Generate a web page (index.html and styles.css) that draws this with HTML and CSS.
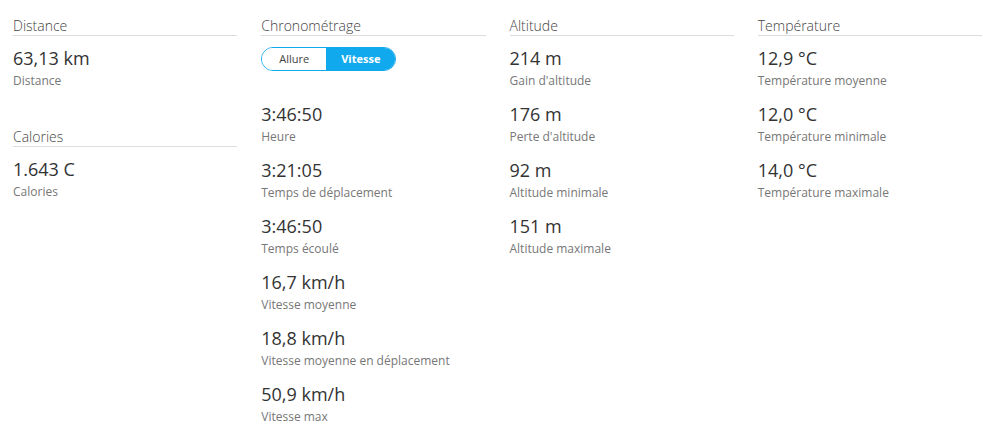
FILE: index.html
```html
<!DOCTYPE html>
<html lang="fr">
<head>
    <meta charset="UTF-8">
    <meta name="viewport" content="width=device-width, initial-scale=1.0">
    <title>Statistiques</title>
    <link rel="stylesheet" href="styles.css">
</head>
<body>

    <div class="stats-grid">

        <!-- Distance + Calories -->
        <div class="stats-column">
            <div class="stats-section">
                <h3 class="section-title">Distance</h3>
                <div class="stat">
                    <div class="stat-value">63,13 km</div>
                    <div class="stat-label">Distance</div>
                </div>
            </div>
            <div class="stats-section">
                <h3 class="section-title">Calories</h3>
                <div class="stat">
                    <div class="stat-value">1.643 C</div>
                    <div class="stat-label">Calories</div>
                </div>
            </div>
        </div>

        <!-- Chronométrage -->
        <div class="stats-column">
            <div class="stats-section">
                <h3 class="section-title">Chronométrage</h3>
                <div class="toggle">
                    <button type="button" class="toggle-btn">Allure</button>
                    <button type="button" class="toggle-btn active">Vitesse</button>
                </div>
                <div class="stat-list">
                    <div class="stat">
                        <div class="stat-value">3:46:50</div>
                        <div class="stat-label">Heure</div>
                    </div>
                    <div class="stat">
                        <div class="stat-value">3:21:05</div>
                        <div class="stat-label">Temps de déplacement</div>
                    </div>
                    <div class="stat">
                        <div class="stat-value">3:46:50</div>
                        <div class="stat-label">Temps écoulé</div>
                    </div>
                    <div class="stat">
                        <div class="stat-value">16,7 km/h</div>
                        <div class="stat-label">Vitesse moyenne</div>
                    </div>
                    <div class="stat">
                        <div class="stat-value">18,8 km/h</div>
                        <div class="stat-label">Vitesse moyenne en déplacement</div>
                    </div>
                    <div class="stat">
                        <div class="stat-value">50,9 km/h</div>
                        <div class="stat-label">Vitesse max</div>
                    </div>
                </div>
            </div>
        </div>

        <!-- Altitude -->
        <div class="stats-column">
            <div class="stats-section">
                <h3 class="section-title">Altitude</h3>
                <div class="stat">
                    <div class="stat-value">214 m</div>
                    <div class="stat-label">Gain d'altitude</div>
                </div>
                <div class="stat">
                    <div class="stat-value">176 m</div>
                    <div class="stat-label">Perte d'altitude</div>
                </div>
                <div class="stat">
                    <div class="stat-value">92 m</div>
                    <div class="stat-label">Altitude minimale</div>
                </div>
                <div class="stat">
                    <div class="stat-value">151 m</div>
                    <div class="stat-label">Altitude maximale</div>
                </div>
            </div>
        </div>

        <!-- Température -->
        <div class="stats-column">
            <div class="stats-section">
                <h3 class="section-title">Température</h3>
                <div class="stat">
                    <div class="stat-value">12,9 °C</div>
                    <div class="stat-label">Température moyenne</div>
                </div>
                <div class="stat">
                    <div class="stat-value">12,0 °C</div>
                    <div class="stat-label">Température minimale</div>
                </div>
                <div class="stat">
                    <div class="stat-value">14,0 °C</div>
                    <div class="stat-label">Température maximale</div>
                </div>
            </div>
        </div>

    </div>

</body>
</html>
```

FILE: styles.css
```css
/* General Body Styles */
body {
    font-family: 'Open Sans', 'Liberation Sans', sans-serif;
    background: #fff;
    margin: 0;
    color: #222;
}

/* Four stat columns */
.stats-grid {
    display: grid;
    grid-template-columns: repeat(4, 1fr);
    column-gap: 24px;
    padding: 16px 1px 0 13px;
}

.stats-section {
    margin-bottom: 37px;
}

.stats-section:last-child,
.stat:last-child {
    margin-bottom: 0;
}

/* Section header with underline */
.section-title {
    margin: 0 0 10px;
    font-size: 14px;
    font-weight: 300;
    line-height: 19px;
    color: #444;
    border-bottom: 1px solid #ddd;
}

/* One value + its label */
.stat {
    margin-bottom: 12px;
}

.stat-value {
    font-size: 18px;
    line-height: 24px;
    color: #333;
}

.stat-label {
    margin-top: 2px;
    font-size: 12px;
    line-height: 18px;
    color: #777;
}

/* Allure / Vitesse switch */
.toggle {
    display: inline-flex;
    margin: 1px 0 0;
    border: 1px solid #11a9ed;
    border-radius: 12px;
    overflow: hidden;
}

.toggle-btn {
    font-family: inherit;
    font-size: 11px;
    line-height: 22px;
    padding: 0 17px;
    border: none;
    background: #fff;
    color: #444;
    cursor: pointer;
}

.toggle-btn.active {
    background-color: #11a9ed;
    color: #fff;
    font-weight: 700;
    padding: 0 15px;
}

.stat-list {
    margin-top: 31px;
}
```
